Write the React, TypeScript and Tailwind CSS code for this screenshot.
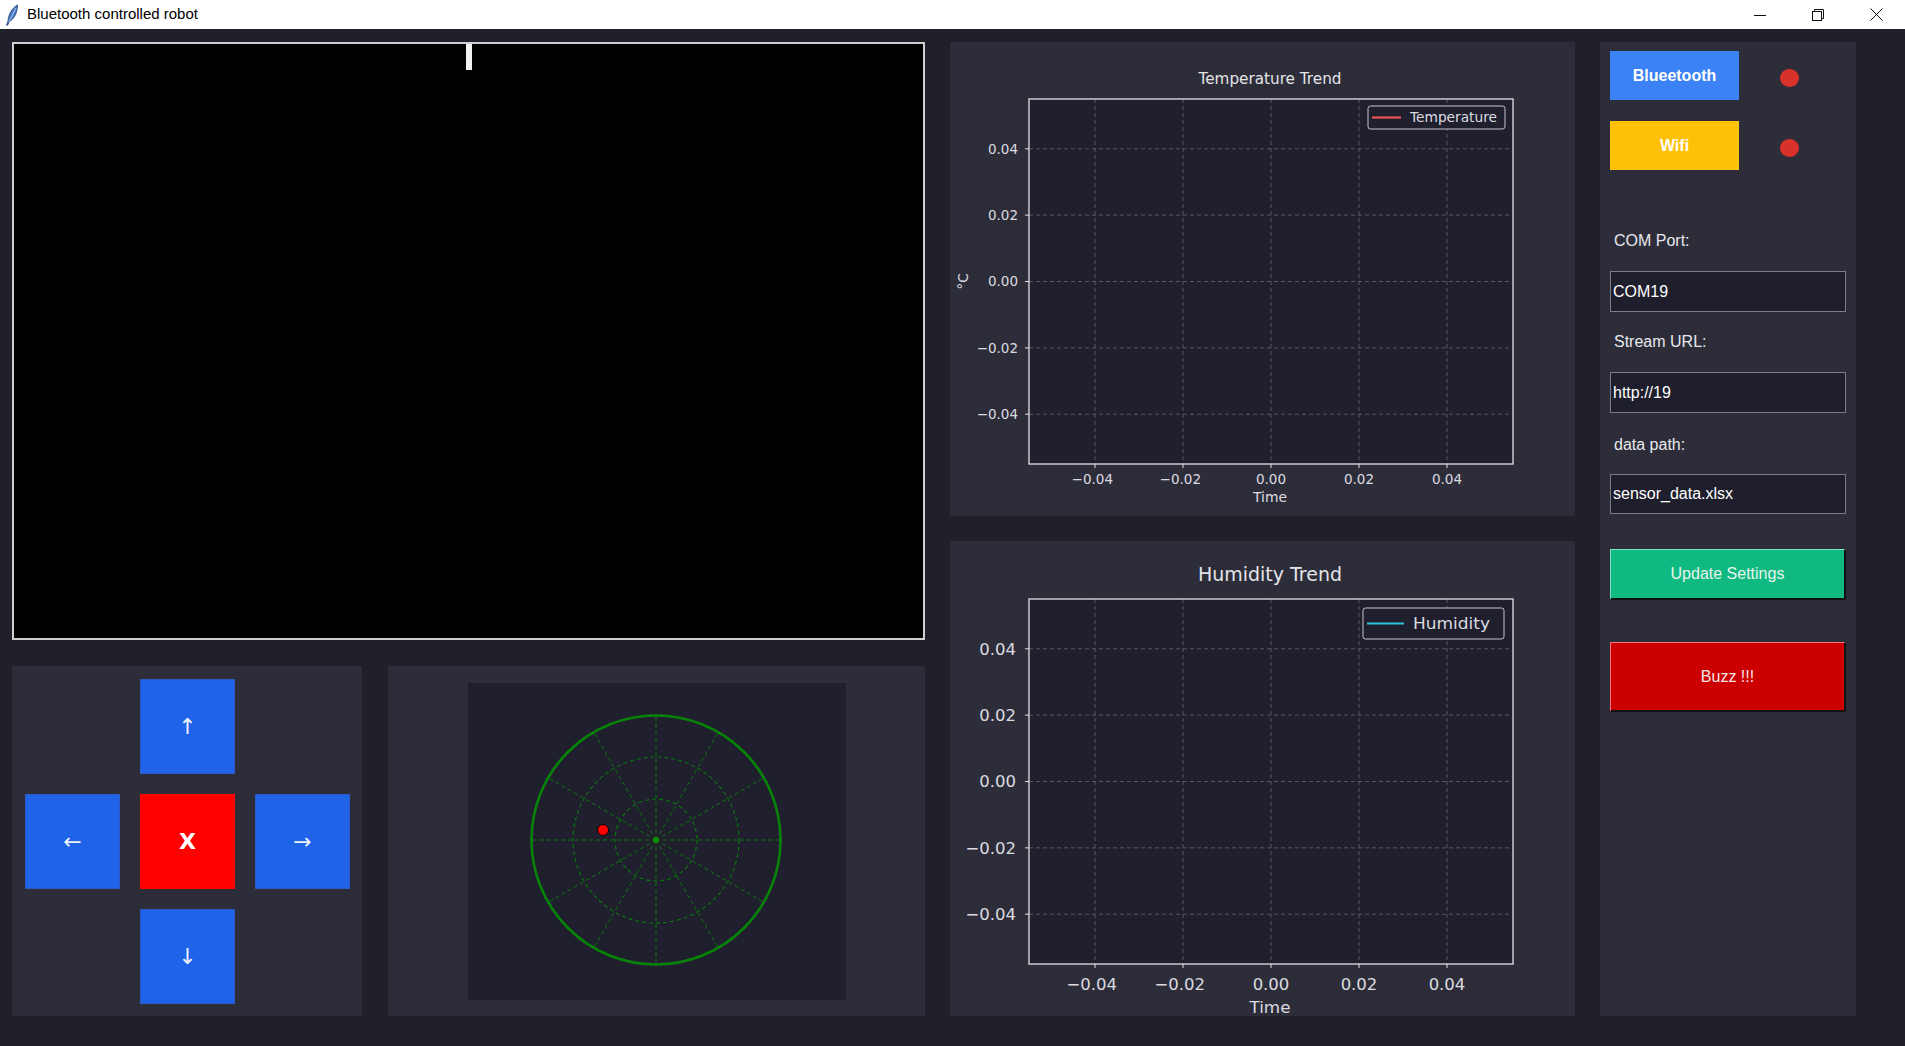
import React from "react";

const MINUS = "\u2212";

const fmt = (v: number) => (v < 0 ? MINUS : "") + Math.abs(v).toFixed(2);

type ChartProps = {
  title: string;
  titleSize: number;
  titleWidth: number;
  titleY: number;
  tickSize: number;
  tickRight: number;
  xLabelY: number;
  timeY: number;
  timeWidth: number;
  plot: { x0: number; x1: number; y0: number; y1: number };
  legend: { x: number; y: number; w: number; h: number; text: string; textWidth: number; color: string; lineW: number };
  ylabel?: { text: string; x: number };
  height: number;
};

const TrendChart = (p: ChartProps) => {
  const { x0, x1, y0, y1 } = p.plot;
  const ticks = [-0.04, -0.02, 0, 0.02, 0.04];
  const xFor = (v: number) => x0 + ((v + 0.055) / 0.11) * (x1 - x0);
  const yFor = (v: number) => y0 + ((0.055 - v) / 0.11) * (y1 - y0);
  const lg = p.legend;

  return (
    <svg width={625} height={p.height} className="block" style={{ fontFamily: "'DejaVu Sans', sans-serif" }}>
      <text x={320} y={p.titleY} fill="#e4e4e8" fontSize={p.titleSize} textAnchor="middle" textLength={p.titleWidth} lengthAdjust="spacingAndGlyphs">
        {p.title}
      </text>
      <rect x={x0} y={y0} width={x1 - x0} height={y1 - y0} fill="#1f1f2e" />
      {ticks.map((t) => (
        <g key={t}>
          <line x1={xFor(t)} x2={xFor(t)} y1={y0} y2={y1} stroke="#5c5c6c" strokeWidth={0.9} strokeDasharray="4 3" />
          <line x1={x0} x2={x1} y1={yFor(t)} y2={yFor(t)} stroke="#5c5c6c" strokeWidth={0.9} strokeDasharray="4 3" />
          <line x1={xFor(t)} x2={xFor(t)} y1={y1} y2={y1 + 4} stroke="#dcdcdc" strokeWidth={1} />
          <line x1={x0 - 4} x2={x0} y1={yFor(t)} y2={yFor(t)} stroke="#dcdcdc" strokeWidth={1} />
          <text x={xFor(t) - (t < 0 ? p.tickSize * 0.2 : 0)} y={p.xLabelY} fill="#dcdce0" fontSize={p.tickSize} textAnchor="middle">
            {fmt(t)}
          </text>
          <text x={p.tickRight} y={yFor(t) + p.tickSize * 0.36} fill="#dcdce0" fontSize={p.tickSize} textAnchor="end">
            {fmt(t)}
          </text>
        </g>
      ))}
      <rect x={x0} y={y0} width={x1 - x0} height={y1 - y0} fill="none" stroke="#e2e2e6" strokeWidth={1.3} />
      <text x={320} y={p.timeY} fill="#dcdce0" fontSize={p.tickSize} textAnchor="middle" textLength={p.timeWidth} lengthAdjust="spacingAndGlyphs">
        Time
      </text>
      {p.ylabel && (
        <text x={0} y={0} fill="#dcdce0" fontSize={p.tickSize} textAnchor="middle" transform={`translate(${p.ylabel.x} ${(y0 + y1) / 2}) rotate(-90)`}>
          {p.ylabel.text}
        </text>
      )}
      <rect x={lg.x} y={lg.y} width={lg.w} height={lg.h} rx={2.5} fill="#1f1f2e" stroke="#c8c8cc" strokeWidth={1} />
      <line x1={lg.x + 4} x2={lg.x + 4 + lg.lineW} y1={lg.y + lg.h / 2} y2={lg.y + lg.h / 2} stroke={lg.color} strokeWidth={2.2} />
      <text
        x={lg.x + lg.lineW + 13}
        y={lg.y + lg.h / 2 + p.tickSize * 0.36}
        fill="#dcdce0"
        fontSize={p.tickSize}
        textLength={lg.textWidth}
        lengthAdjust="spacingAndGlyphs"
      >
        {lg.text}
      </text>
    </svg>
  );
};

const Radar = () => {
  const cx = 188;
  const cy = 157;
  const spokes = Array.from({ length: 12 }, (_, i) => (i * Math.PI) / 6);
  return (
    <svg width={378} height={317} className="block bg-[#1f1f2e]">
      {spokes.map((a, i) => (
        <line
          key={i}
          x1={cx}
          y1={cy}
          x2={cx + 125 * Math.cos(a)}
          y2={cy + 125 * Math.sin(a)}
          stroke="#0b7a0b"
          strokeWidth={1}
          strokeDasharray="4 3"
        />
      ))}
      <circle cx={cx} cy={cy} r={83} fill="none" stroke="#0b7a0b" strokeWidth={1.1} strokeDasharray="4 3" />
      <circle cx={cx} cy={cy} r={41} fill="none" stroke="#0b7a0b" strokeWidth={1.1} strokeDasharray="4 3" />
      <circle cx={cx} cy={cy} r={124.5} fill="none" stroke="#078407" strokeWidth={2.6} />
      <circle cx={cx} cy={cy} r={3} fill="#0b8a0b" />
      <circle cx={135} cy={147} r={5.5} fill="#ff0000" stroke="#000" strokeWidth={1} />
    </svg>
  );
};

const PadButton = ({ label, red }: { label: string; red?: boolean }) => (
  <button
    className={
      red
        ? "w-[95px] h-[95px] bg-[#ff0000] text-white text-[22px] font-bold flex items-center justify-center"
        : "w-[95px] h-[95px] bg-[#1f63e8] border border-[#2a5cc4] text-[#eef2ff] text-[22px] flex items-center justify-center"
    }
    style={{ fontFamily: "'DejaVu Sans', 'Liberation Sans', sans-serif" }}
  >
    {label}
  </button>
);

const Field = ({ value }: { value: string }) => (
  <div className="h-full w-[236px] bg-[#1e1e2c] border border-[#7c7c86] pl-[2px] flex items-center text-white text-[16px]">
    {value}
  </div>
);

const TitleBar = () => (
  <div className="h-[29px] bg-white flex items-center shrink-0" style={{ fontFamily: "'Liberation Sans', sans-serif" }}>
    <svg width={16} height={22} viewBox="0 0 16 22" className="ml-[4px]">
      <path d="M13.5 1 C8 4 4.5 10 4 17 L2.5 21 L3.6 21.3 L5 18 C10 15 13.5 9 13.5 1 Z" fill="#4c7cc6" stroke="#253f73" strokeWidth={0.8} />
      <path d="M12 4 L5 18" stroke="#c9d8f2" strokeWidth={0.7} />
    </svg>
    <span className="ml-[7px] text-[15px] text-black">Bluetooth controlled robot</span>
    <div className="ml-auto flex items-center h-full">
      <div className="w-[58px] h-full flex items-center justify-center">
        <svg width={12} height={12}>
          <line x1={0} x2={12} y1={6.5} y2={6.5} stroke="#111" strokeWidth={1} />
        </svg>
      </div>
      <div className="w-[58px] h-full flex items-center justify-center">
        <svg width={12} height={12}>
          <rect x={0.5} y={2.5} width={9} height={9} fill="none" stroke="#111" strokeWidth={1} />
          <path d="M2.5 2.5 V0.5 H11.5 V9.5 H9.5" fill="none" stroke="#111" strokeWidth={1} />
        </svg>
      </div>
      <div className="w-[58px] h-full flex items-center justify-center">
        <svg width={13} height={13}>
          <path d="M0.5 0.5 L12.5 12.5 M12.5 0.5 L0.5 12.5" stroke="#111" strokeWidth={1} />
        </svg>
      </div>
    </div>
  </div>
);

export default function App() {
  return (
    <div className="w-[1905px] h-[1046px] flex flex-col bg-[#20202b] overflow-hidden">
      <TitleBar />
      <div className="flex gap-[25px] pl-[12px] pt-[13px]" style={{ fontFamily: "'Liberation Sans', Arial, sans-serif" }}>
        {/* left column: video + controls */}
        <div className="w-[913px] flex flex-col gap-[26px]">
          <div className="relative h-[598px] bg-black border-2 border-[#cfcfd2]">
            <div className="absolute left-[452px] top-0 w-[6px] h-[26px] bg-[#f2f2f2]" />
          </div>
          <div className="flex gap-[26px] h-[350px]">
            <div className="w-[350px] bg-[#2d2d3a] p-[13px] grid grid-cols-[95px_95px_95px] grid-rows-[95px_95px_95px] gap-[20px]">
              <div />
              <PadButton label="↑" />
              <div />
              <PadButton label="←" />
              <PadButton label="X" red />
              <PadButton label="→" />
              <div />
              <PadButton label="↓" />
              <div />
            </div>
            <div className="flex-1 bg-[#2d2d3a] flex items-center justify-center">
              <Radar />
            </div>
          </div>
        </div>

        {/* middle column: charts */}
        <div className="w-[625px] flex flex-col gap-[25px]">
          <div className="h-[474px] bg-[#2d2d3a]">
            <TrendChart
              height={474}
              title="Temperature Trend"
              titleSize={15.5}
              titleWidth={143}
              titleY={42}
              tickSize={13.5}
              tickRight={68}
              xLabelY={442}
              timeY={460}
              timeWidth={34}
              plot={{ x0: 79, x1: 563, y0: 57, y1: 422 }}
              legend={{ x: 418, y: 64, w: 137, h: 23, text: "Temperature", textWidth: 87, color: "#f05454", lineW: 29 }}
              ylabel={{ text: "°C", x: 18 }}
            />
          </div>
          <div className="h-[475px] bg-[#2d2d3a]">
            <TrendChart
              height={475}
              title="Humidity Trend"
              titleSize={19}
              titleWidth={144}
              titleY={40}
              tickSize={16.5}
              tickRight={66}
              xLabelY={449}
              timeY={472}
              timeWidth={41}
              plot={{ x0: 79, x1: 563, y0: 58, y1: 423 }}
              legend={{ x: 413, y: 67, w: 141, h: 31, text: "Humidity", textWidth: 77, color: "#2cc5dc", lineW: 37 }}
              ylabel={{ text: "%", x: -4 }}
            />
          </div>
        </div>

        {/* right column: settings */}
        <div className="w-[256px] h-[974px] bg-[#2d2d3a] px-[10px] pt-[9px] flex flex-col text-[16px]">
          <div className="h-[49px] flex items-center shrink-0">
            <button className="w-[129px] h-full bg-[#3b82f6] text-white font-bold">Blueetooth</button>
            <div className="ml-[41px] mt-[5px] w-[19px] h-[18px] rounded-full bg-[#d9322a]" />
          </div>
          <div className="mt-[21px] h-[49px] flex items-center shrink-0">
            <button className="w-[129px] h-full bg-[#ffc107] text-white font-bold">Wifi</button>
            <div className="ml-[41px] mt-[5px] w-[19px] h-[18px] rounded-full bg-[#d9322a]" />
          </div>

          <div className="mt-[61px] h-[20px] pl-[4px] leading-[20px] text-[#e8e8ec]">COM Port:</div>
          <div className="mt-[20px] h-[41px]">
            <Field value="COM19" />
          </div>
          <div className="mt-[20px] h-[20px] pl-[4px] leading-[20px] text-[#e8e8ec]">Stream URL:</div>
          <div className="mt-[20px] h-[41px]">
            <Field value="http://19" />
          </div>
          <div className="mt-[22px] h-[20px] pl-[4px] leading-[20px] text-[#e8e8ec]">data path:</div>
          <div className="mt-[19px] h-[40px]">
            <Field value="sensor_data.xlsx" />
          </div>

          <button className="mt-[35px] w-[236px] h-[51px] shrink-0 bg-[#10b981] text-[#e6f4ee] border-t border-l border-[#7fe0bd] border-b-2 border-r-2 border-b-[#111] border-r-[#111]">
            Update Settings
          </button>
          <button className="mt-[42px] w-[236px] h-[70px] shrink-0 bg-[#cc0000] text-[#f4e6e6] border-t border-l border-[#ee7777] border-b-2 border-r-2 border-b-[#111] border-r-[#111]">
            Buzz !!!
          </button>
        </div>
      </div>
    </div>
  );
}
